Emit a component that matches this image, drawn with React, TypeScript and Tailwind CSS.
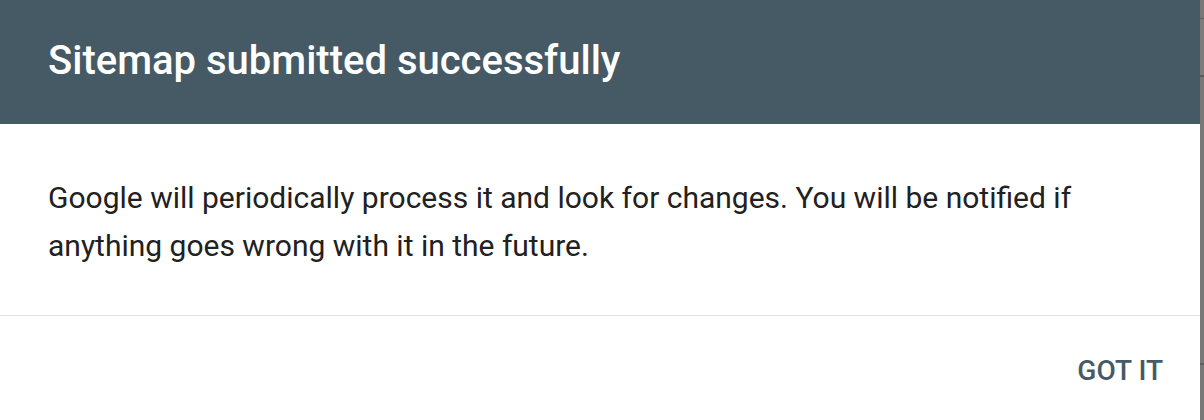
export default function App() {
  return (
    <div className="flex h-[420px] w-[1204px] overflow-hidden bg-white font-['Roboto','Liberation_Sans',sans-serif]">
      <div className="flex w-[1200px] flex-col">
        <div className="flex h-[124px] items-center bg-[#455a64] px-12 pb-[2px]">
          <h1 className="text-[40px] font-medium leading-none text-white">Sitemap submitted successfully</h1>
        </div>
        <div className="flex h-[192px] flex-col justify-center border-b border-[#e0e0e0] px-12 pt-[4px]">
          <p className="text-[30px] leading-[48px] text-[#212121]">
            Google will periodically process it and look for changes. You will be notified if
            <br />
            anything goes wrong with it in the future.
          </p>
        </div>
        <div className="flex flex-1 items-center justify-end pl-12 pr-[37px] pt-[6px]">
          <button className="text-[28px] font-medium uppercase text-[#455a64]">Got it</button>
        </div>
      </div>
      <div className="flex w-[4px] flex-col bg-[#787878]">
        <div className="h-[18px]" />
        <div className="h-[1px] bg-[#5f5f5f]" />
        <div className="h-[56px] bg-[#7c7c7c]" />
        <div className="h-[2px] bg-[#5a5a5a]" />
        <div className="h-[286px]" />
        <div className="h-[2px] bg-[#5f5f5f]" />
      </div>
    </div>
  );
}
